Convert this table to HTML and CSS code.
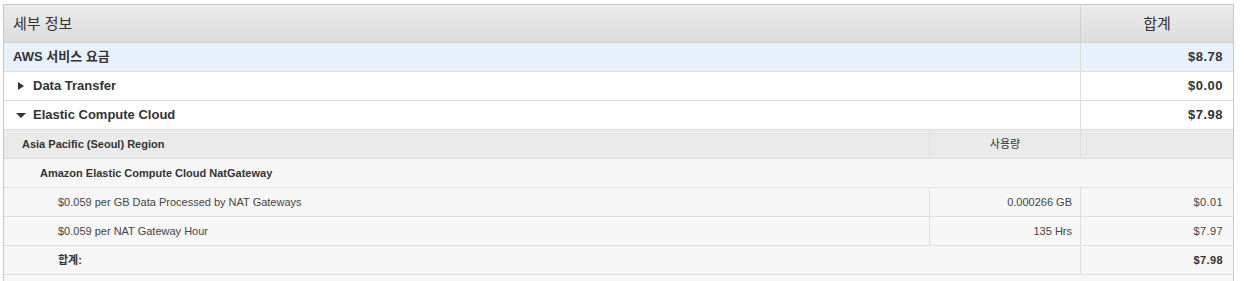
FILE: index.html
```html
<!DOCTYPE html>
<html lang="ko">
<head>
<meta charset="utf-8">
<title>세부 정보</title>
<link rel="stylesheet" href="styles.css">
</head>
<body>
<div class="bill">
  <div class="row head">
    <div class="c span2 pl">세부 정보</div>
    <div class="c dv center">합계</div>
  </div>
  <div class="row aws">
    <div class="c span2 pl b">AWS 서비스 요금</div>
    <div class="c dv money b">$8.78</div>
  </div>
  <div class="row svc">
    <div class="c span2 b"><span class="tri right"></span>Data Transfer</div>
    <div class="c dv money b">$0.00</div>
  </div>
  <div class="row svc">
    <div class="c span2 b"><span class="tri down"></span>Elastic Compute Cloud</div>
    <div class="c dv money b">$7.98</div>
  </div>
  <div class="row sub region">
    <div class="c lv1 b">Asia Pacific (Seoul) Region</div>
    <div class="c dv center">사용량</div>
    <div class="c dv"></div>
  </div>
  <div class="row sub">
    <div class="c span3 lv2 b">Amazon Elastic Compute Cloud NatGateway</div>
  </div>
  <div class="row sub">
    <div class="c lv3">$0.059 per GB Data Processed by NAT Gateways</div>
    <div class="c dv usage">0.000266 GB</div>
    <div class="c dv smoney">$0.01</div>
  </div>
  <div class="row sub">
    <div class="c lv3">$0.059 per NAT Gateway Hour</div>
    <div class="c dv usage">135 Hrs</div>
    <div class="c dv smoney">$7.97</div>
  </div>
  <div class="row sub">
    <div class="c span2 lv3 b">합계:</div>
    <div class="c dv smoney b">$7.98</div>
  </div>
  <div class="row sub">
    <div class="c span3"></div>
  </div>
</div>
</body>
</html>
```

FILE: styles.css
```css
html, body {
  margin: 0;
  padding: 0;
  background: #ffffff;
}

body {
  font-family: "Liberation Sans", Arial, "Noto Sans CJK KR", sans-serif;
  color: #333333;
}

.bill {
  margin: 4px 0 0 3px;
  width: 1229px;
  border: 1px solid #c8c8c8;
  border-bottom: none;
}

.row {
  display: grid;
  grid-template-columns: 925px 151px 153px;
  height: 28px;
  border-bottom: 1px solid #dddddd;
  font-size: 13px;
  line-height: 16px;
}

.c {
  display: flex;
  align-items: center;
  box-sizing: border-box;
  white-space: nowrap;
  min-width: 0;
}

.span2 { grid-column: span 2; }
.span3 { grid-column: span 3; }

.dv { border-left: 1px solid #dddddd; }

.b { font-weight: bold; }

.center { justify-content: center; }

.pl { padding-left: 9px; }

.head {
  height: 37px;
  border-bottom-color: #cfcfcf;
  background: linear-gradient(#ececec, #dcdcdc);
  font-size: 15px;
  color: #333333;
}

.head .dv { border-left-color: #d0d0d0; }

.aws { background: #e8f2fc; }

.svc .span2 { padding-left: 12px; }

.money {
  justify-content: flex-end;
  padding-right: 10px;
  letter-spacing: 0.5px;
}

.tri {
  display: inline-block;
  width: 0;
  height: 0;
  margin-right: 7px;
}

.tri.right {
  margin-left: 2px;
  margin-right: 9px;
  border-top: 4px solid transparent;
  border-bottom: 4px solid transparent;
  border-left: 6px solid #333333;
}

.tri.down {
  border-left: 5px solid transparent;
  border-right: 5px solid transparent;
  border-top: 5px solid #333333;
  margin-right: 7px;
}

.sub {
  background: #f7f7f7;
  font-size: 11px;
  line-height: 14px;
  color: #444444;
  border-bottom-color: #e0e0e0;
}

.sub.region {
  background: #eaeaea;
  color: #333333;
}

.sub .dv { border-left-color: #dedede; }

.lv1 { padding-left: 18px; }
.lv2 { padding-left: 36px; color: #333333; }
.lv3 { padding-left: 54px; }
.lv3.b { color: #333333; }

.usage {
  justify-content: flex-end;
  padding-right: 8px;
}

.smoney {
  justify-content: flex-end;
  padding-right: 10px;
  letter-spacing: 0.4px;
}

.smoney.b { color: #333333; }
```
